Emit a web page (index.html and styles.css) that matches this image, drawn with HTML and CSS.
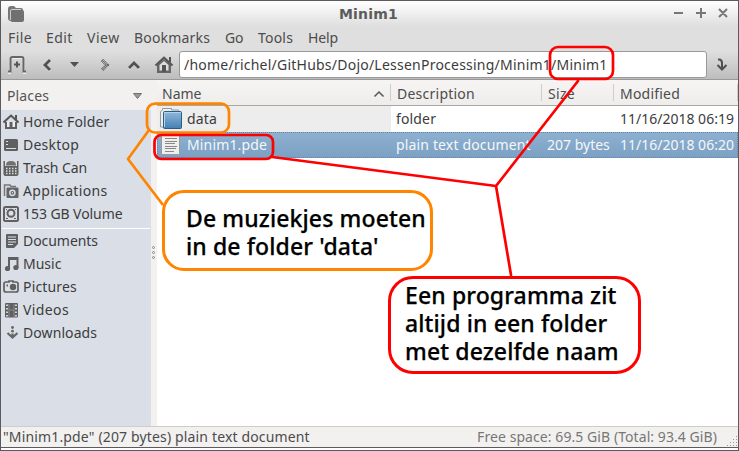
FILE: index.html
```html
<!DOCTYPE html>
<html lang="en">
<head>
<meta charset="utf-8">
<title>Minim1</title>
<link rel="stylesheet" href="styles.css">
</head>
<body>
<div class="window">
  <header class="titlebar">
    <svg class="app-icon" width="16" height="16" viewBox="0 0 16 16"><path d="M0 3Q0 0 3 0H6L8 2H13Q15 2 15 4V6H4V15H3Q0 15 0 12Z" fill="#777"/><rect x="2.500" y="4" width="13.500" height="12" rx="2" fill="#707070"/><path d="M2.500 14V5Q2.500 3.500 4 3.500H13" fill="none" stroke="#ccc"/></svg>
    <h1>Minim1</h1>
    <svg class="controls" width="56" height="14" viewBox="0 0 56 14" fill="none" stroke="#777" stroke-width="2"><path d="M1 7H10M23 7H33M28 2V12M46 3L54 11M54 3L46 11"/></svg>
  </header>
  <nav class="menubar">
    <span class="m-file">File</span><span class="m-edit">Edit</span><span class="m-view">View</span><span class="m-bookmarks">Bookmarks</span><span class="m-go">Go</span><span class="m-tools">Tools</span><span class="m-help">Help</span>
  </nav>
  <div class="toolbar">
    <svg class="nav-icons" width="178" height="28" viewBox="1 51 178 28">
      <g fill="none" stroke="#eee" stroke-width="2" transform="translate(0 1)"><path d="M8 72H10V59Q10 57 12 57H22Q24 57 24 59V72H26"/><path d="M50 60L45 65L50 70M129 68L134 63L139 68"/></g>
      <path d="M8 71.500H10.500V59Q10.500 57 12.500 57H21.500Q23.500 57 23.500 59V71.500H26" fill="none" stroke="#666" stroke-width="2"/>
      <path d="M14 64.500H20M17 61.500V67.500" stroke="#555" stroke-width="2"/>
      <path d="M50 60L45 65L50 70" fill="none" stroke="#505050" stroke-width="2.800"/>
      <path d="M70 62H79L74.500 67Z" fill="#505050"/>
      <path d="M102 60L107 65L102 70" fill="none" stroke="#666" stroke-width="3.500" stroke-dasharray="1 .6"/>
      <path d="M129 68L134 63L139 68" fill="none" stroke="#505050" stroke-width="2.800"/>
      <path d="M157 65V73H171V65L164 59Z" fill="#666"/><path d="M159.500 65V70.500H168.500V65L164 61Z" fill="#ddd"/>
      <path d="M155.500 65.500L164 57.500L172.500 65.500M170 57V62" fill="none" stroke="#555" stroke-width="2"/><path d="M162 65H166V72H162Z" fill="#555"/>
    </svg>
    <div class="address">/home/richel/GitHubs/Dojo/LessenProcessing/Minim1/Minim1</div>
    <svg class="jump" width="12" height="16" viewBox="0 0 12 16" fill="none" stroke="#505050" stroke-width="2"><path d="M2 2.500H3Q6 2.500 6 6V12M1.500 8L6 12.500L10.500 8"/></svg>
  </div>
  <main class="content">
    <aside class="side">
      <div class="places"><span>Places</span><svg width="9" height="6" viewBox="0 0 9 6"><path d="M.5 .5H8.500L4.500 5.500Z" fill="#999" stroke="#707070"/></svg></div>
      <div class="panel">
        <div class="place p-home"><svg viewBox="0 0 16 16"><path d="M3 8V14H13V8" fill="#eee" stroke="#606060" stroke-width="2"/><path d="M0.500 8.500L8 1.500L15.500 8.500M13 1V6" fill="none" stroke="#555" stroke-width="2"/><path d="M6.500 8H9.500V14H6.500Z" fill="#606060"/></svg><span>Home Folder</span></div>
        <div class="place p-desktop"><svg viewBox="0 0 16 16"><rect x="1" y="2" width="14" height="12" rx="1.500" fill="#606060"/><path d="M3 4.500H5M3 7.500H5M3 11.500H13" stroke="#dadfe7"/></svg><span>Desktop</span></div>
        <div class="place p-trash"><svg viewBox="0 0 16 16"><path d="M3 5Q3 1 8 1Q13 1 13 5V5.500H3Z" fill="#707070"/><path d="M.5 1H2V6H14V1H15.500V14Q15.500 16 13.500 16H2.500Q.5 16 .5 14Z" fill="#606060"/><path d="M3 8.500H14M3 11H14M3 13.500H14" stroke="#dadfe7" stroke-width="1.300" stroke-dasharray="1.500 1.500"/></svg><span>Trash Can</span></div>
        <div class="place p-apps"><svg viewBox="0 0 16 16"><path d="M1.500 13V2H7L8 3.500H13" fill="none" stroke="#777" stroke-width="1.500"/><rect x="3.500" y="4.500" width="12" height="10.500" rx="1" fill="#646464"/><circle cx="9.400" cy="9.800" r="2.600" fill="none" stroke="#dadfe7" stroke-width="1.500"/><circle cx="9.400" cy="9.800" r=".8" fill="#dadfe7"/></svg><span>Applications</span></div>
        <div class="place p-volume"><svg viewBox="0 0 16 16"><rect x="1" y="1" width="14" height="14" rx="1.500" fill="#dadfe7" stroke="#606060" stroke-width="2"/><circle cx="8" cy="7.200" r="3.500" fill="none" stroke="#606060" stroke-width="2"/><path d="M3 12.500H5M11 12.500H13M3 3.500H4M12 3.500H13" stroke="#606060"/></svg><span>153 GB Volume</span></div>
        <hr>
        <div class="place p-docs"><svg viewBox="0 0 16 16"><path d="M4 1H14Q15 1 15 2V11L11 15H4Q3 15 3 14V2Q3 1 4 1Z" fill="#606060"/><path d="M5 4H13M5 6.500H13M5 9H13M5 11.500H10" stroke="#dadfe7"/></svg><span>Documents</span></div>
        <div class="place p-music"><svg viewBox="0 0 16 16"><path d="M5 1H15.500V12H13.500V4H7V13H5Z" fill="#606060"/><circle cx="4.500" cy="12.500" r="2.600" fill="#606060"/><circle cx="12.900" cy="11.500" r="2.600" fill="#606060"/></svg><span>Music</span></div>
        <div class="place p-pics"><svg viewBox="0 0 16 16"><path d="M3 3H6V2H10V3H13Q15 3 15 5V11Q15 13 13 13H3Q1 13 1 11V5Q1 3 3 3Z" fill="#dadfe7" stroke="#606060" stroke-width="1.700"/><circle cx="10" cy="8" r="3.200" fill="#606060"/><path d="M3.500 6.500H5" stroke="#606060" stroke-width="2"/></svg><span>Pictures</span></div>
        <div class="place p-videos"><svg viewBox="0 0 16 16"><rect x="2" y="1" width="13" height="14.500" rx="1" fill="#606060"/><path d="M4 2.500V15M13 2.500V15" stroke="#dadfe7" stroke-width="1.800" stroke-dasharray="1.500 2"/><path d="M6 2V15M11 2V15M6 8H11" stroke="#8a8a8a"/></svg><span>Videos</span></div>
        <div class="place p-down"><svg viewBox="0 0 16 16"><circle cx="9.500" cy="2.500" r="1.400" fill="#666"/><circle cx="9.500" cy="6.200" r="1.400" fill="#666"/><path d="M4.500 8L9.500 12.500L14.500 8M9.500 8.500V12" fill="none" stroke="#666" stroke-width="2.200"/></svg><span>Downloads</span></div>
      </div>
    </aside>
    <div class="splitter"><i></i><i></i><i></i></div>
    <section class="files">
      <div class="row head">
        <div class="c-name"><span>Name</span><svg width="12" height="8" viewBox="0 0 12 8"><path d="M1.500 6.500L6 2L10.500 6.500" fill="none" stroke="#555" stroke-width="1.500"/></svg></div>
        <div class="c-desc">Description</div><div class="c-size">Size</div><div class="c-mod">Modified</div>
      </div>
      <div class="row">
        <div class="c-name"><svg width="24" height="24" viewBox="0 0 24 24"><path d="M1.500 20V4.500L3.500 3V1.500H12.500V3H19.500V20Z" fill="#eee" stroke="#999"/><defs><linearGradient id="blue" x2="0" y2="1"><stop stop-color="#91b9dc"/><stop offset="1" stop-color="#4481b3"/></linearGradient></defs><rect x="4.500" y="4.500" width="18" height="17" rx="1" fill="url(#blue)" stroke="#285d88"/><path d="M5.500 20V5.500H21.500" fill="none" stroke="#b6d2e8"/></svg><span>data</span></div>
        <div class="c-desc">folder</div><div class="c-size"></div><div class="c-mod">11/16/2018 06:19</div>
      </div>
      <div class="row selected">
        <div class="c-name"><svg width="24" height="24" viewBox="0 0 24 24"><rect x="2.500" y="1.500" width="18" height="20" rx="1" fill="#eee" stroke="#999"/><path d="M6 5.500H18M6 8.500H18M6 10.500H16M6 13.500H18M6 15.500H17M6 18.500H15" stroke="#888"/></svg><span>Minim1.pde</span></div>
        <div class="c-desc">plain text document</div><div class="c-size">207 bytes</div><div class="c-mod">11/16/2018 06:20</div>
      </div>
    </section>
  </main>
  <footer class="status"><span class="s-file">"Minim1.pde" (207 bytes) plain text document</span><span class="s-space">Free space: 69.5 GiB (Total: 93.4 GiB)</span>
    <svg class="grip" width="12" height="12" viewBox="0 0 12 12"><path d="M1 10.500H12M4 7.500H12M7 4.500H12M10 1.500H12" stroke="#999" stroke-dasharray="1 2"/></svg>
  </footer>
  <div class="under-edge"></div>
</div>
<svg class="marks" width="739" height="451" viewBox="0 0 739 451" fill="none" stroke-width="2.700" stroke-linejoin="round">
  <g stroke="#ff8400"><rect x="147" y="103.700" width="82" height="28.800" rx="8"/><path d="M149 130L128 159L163 205"/></g>
  <g stroke="#f00"><rect x="550" y="47" width="63" height="32" rx="8"/><rect x="154.500" y="135" width="118.500" height="24" rx="7"/><path d="M578 81L496 186L272 157M496 186L511 275" stroke-linecap="round"/></g>
</svg>
<div class="note orange">De muziekjes moeten
in de folder 'data'</div>
<div class="note red">Een programma zit
altijd in een folder
met dezelfde naam</div>
</body>
</html>
```
FILE: styles.css
```css
* { box-sizing: border-box; }
body {
  margin: 0;
  width: 739px;
  height: 451px;
  overflow: hidden;
  position: relative;
  background: #fff;
  font: 14px/20px "Noto Sans", sans-serif;
  color: #3c3c3c;
  white-space: nowrap;
}
svg { display: block; flex: none; }
.window {
  height: 451px;
  border: 1px solid #5c5a5c;
  display: flex;
  flex-direction: column;
}
.titlebar {
  height: 25px;
  display: flex;
  align-items: center;
  padding: 0 9px 0 7px;
  background: linear-gradient(#fff, #dfdfdf);
}
.titlebar h1 {
  flex: 1;
  margin: 0 0 0 40px;
  text-align: center;
  font: bold 14px/20px "DejaVu Sans", sans-serif;
  letter-spacing: 0.2px;
  color: #5c5c5c;
}
.controls { margin-bottom: 2px; }
.menubar {
  height: 25px;
  display: flex;
  padding: 2px 0 0 7px;
  background: #dfdfdf;
  color: #4c4c4c;
}
.menubar span { flex: none; }
.m-file { width: 38px; letter-spacing: 0.4px; }
.m-edit { width: 41px; letter-spacing: 0.4px; }
.m-view { width: 47px; letter-spacing: 0.5px; }
.m-bookmarks { width: 91px; letter-spacing: 0.18px; }
.m-go { width: 33px; letter-spacing: -0.3px; }
.m-tools { width: 50px; letter-spacing: 0.2px; }
.m-help { letter-spacing: -0.1px; }
.toolbar {
  height: 29px;
  display: flex;
  background: linear-gradient(#dfdfdf, #bdbdbd);
  border-bottom: 1px solid #999;
}
.address {
  width: 528px;
  height: 27px;
  border: 1px solid #999;
  border-radius: 3px;
  background: #fff;
  padding: 3px 4px;
  letter-spacing: 0.23px;
}
.jump { margin: 6px 0 0 9px; }
.content { flex: 1; display: flex; min-height: 0; background: #f2f1f0; }
.side { width: 150px; display: flex; flex-direction: column; }
.places {
  height: 30px;
  display: flex;
  justify-content: space-between;
  align-items: center;
  padding: 1px 9px 0 6px;
  letter-spacing: 0.12px;
  color: #555;
}
.panel { flex: 1; background: #dadfe7; }
.place { height: 23px; display: flex; align-items: center; gap: 4px; padding-left: 2px; }
.place svg { width: 16px; height: 16px; }
.panel hr { margin: 3px 1px 0; border: 0; height: 1px; background: #fff; }
.p-home { letter-spacing: 0.13px; }
.p-desktop { letter-spacing: 0.22px; }
.p-trash { letter-spacing: -0.09px; }
.p-apps { letter-spacing: 0.34px; }
.p-volume { letter-spacing: -0.07px; }
.p-docs { letter-spacing: -0.05px; }
.p-pics { letter-spacing: 0.17px; }
.p-videos { letter-spacing: 0.38px; }
.p-down { letter-spacing: 0.08px; }
.splitter {
  width: 6px;
  display: flex;
  flex-direction: column;
  gap: 2px;
  padding: 166px 0 0 1px;
}
.splitter i { width: 3px; height: 3px; border: 1px solid #888; border-radius: 50%; }
.files { flex: 1; background: #fff; }
.row { height: 26px; display: grid; grid-template-columns: 234px 151px 72px 1fr; }
.row > div { display: flex; align-items: center; padding-left: 5px; }
.row .c-name { padding-left: 2px; gap: 4px; background: #ededed; letter-spacing: 0.15px; }
.row .c-desc { letter-spacing: 0.15px; }
.row .c-mod { padding-left: 6px; }
.row.head {
  background: linear-gradient(#f6f5f4, #eeedeb);
  border-bottom: 1px solid #aaa7a3;
  color: #4c4c4c;
}
.head > div { background: linear-gradient(#cfcdca, #cfcdca) right 4px / 1px 17px no-repeat; }
.row.head > div { padding-top: 2px; }
.row.head .c-name {
  background: linear-gradient(#cfcdca, #cfcdca) right 4px / 1px 17px no-repeat;
  justify-content: space-between;
  padding: 2px 6px 0 5px;
  letter-spacing: 0;
}
.row.head .c-desc { padding-left: 6px; letter-spacing: 0.24px; }
.row.head .c-size { padding-left: 6px; letter-spacing: 0.3px; }
.row.head .c-mod { letter-spacing: 0.21px; }
.row.selected {
  background: linear-gradient(#8fb1d1, #7ba0c3);
  color: #f4f7fa;
  outline: 1px dotted #6488aa;
  outline-offset: -1px;
}
.row.selected .c-name { background: none; }
.status {
  height: 21px;
  display: flex;
  justify-content: space-between;
  border-top: 1px solid #cfcdca;
  background: #f2f1f0;
  padding-left: 2px;
  color: #4c4c4c;
}
.s-file { letter-spacing: 0.15px; flex: 1; }
.s-space { letter-spacing: 0.07px; color: #777; margin-right: 9px; }
.grip { margin-top: 8px; }
.under-edge { height: 3px; border-top: 1px solid #5c5a5c; background: #fff; }
.marks { position: absolute; left: 0; top: 0; }
.note {
  position: absolute;
  border: 3px solid;
  background: #fff;
  font-size: 23px;
  font-weight: 500;
  line-height: 28px;
  letter-spacing: 0.12px;
  white-space: pre;
  -webkit-text-stroke: 0.25px #000;
}
.note.orange {
  left: 162px;
  top: 190px;
  width: 271px;
  height: 81px;
  border-color: #ff8400;
  border-radius: 22px;
  padding: 11px 21px;
  color: #000;
}
.note.red {
  left: 388px;
  top: 276px;
  width: 253px;
  height: 98px;
  border-color: #f00;
  border-radius: 25px;
  padding: 2px 14px;
  color: #000;
}
```
